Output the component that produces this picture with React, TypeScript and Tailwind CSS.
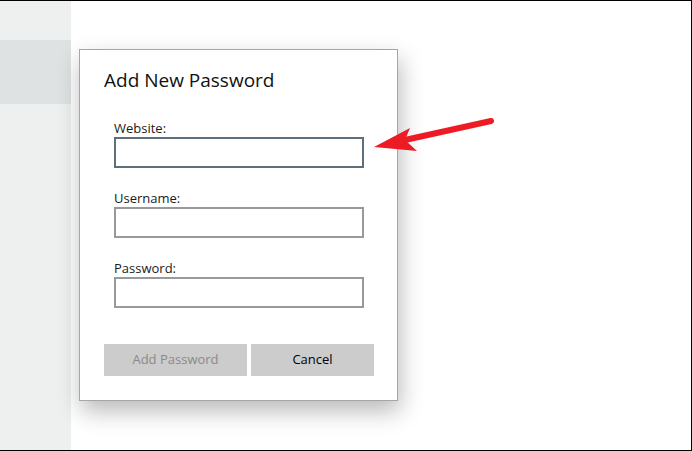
const Field = ({ label, focused }: { label: string; focused?: boolean }) => (
  <div className="flex flex-col">
    <label className="h-[18px] text-[13px] leading-[18px] text-[#1a1a1a]">{label}</label>
    <div
      className={
        focused
          ? "h-[31px] w-[250px] border-2 border-[#5d6f7b] bg-white"
          : "h-[31px] w-[250px] border-2 border-[#999999] bg-white"
      }
    />
  </div>
);

const App = () => {
  return (
    <div
      className="relative flex h-[451px] w-[692px] overflow-hidden border-t border-r border-b border-black bg-white"
      style={{ fontFamily: '"Open Sans", "Noto Sans", sans-serif' }}
    >
      <aside className="flex w-[71px] shrink-0 flex-col bg-[#eef0f0]">
        <div className="h-[39px]" />
        <div className="h-[64px] bg-[#dfe2e2]" />
      </aside>

      <main className="flex-1 pl-[8px] pt-[48px]">
        <div className="flex h-[352px] w-[319px] flex-col border border-[#a6a6a6] bg-white pl-[24px] pt-[16px] shadow-[2px_10px_22px_rgba(0,0,0,0.28)]">
          <h2 className="text-[19px] leading-[28px] text-[#111]">Add New Password</h2>
          <div className="mt-[25px] flex flex-col gap-[21px] pl-[10px]">
            <Field label="Website:" focused />
            <Field label="Username:" />
            <Field label="Password:" />
          </div>
          <div className="mt-[36px] flex gap-[4px]">
            <button className="h-[32px] w-[143px] bg-[#cccccc] text-[13px] text-[#8a8a8a]">Add Password</button>
            <button className="h-[32px] w-[123px] bg-[#cccccc] text-[13px] text-black">Cancel</button>
          </div>
        </div>
      </main>

      {/* annotation arrow */}
      <svg className="absolute left-0 top-0" width="692" height="451" viewBox="0 0 692 451">
        <line x1="491" y1="120" x2="405" y2="139" stroke="#ed1c24" strokeWidth="6" strokeLinecap="round" />
        <polygon points="374,146 410,127 405,139 417,150" fill="#ed1c24" />
      </svg>
    </div>
  );
};

export default App;
